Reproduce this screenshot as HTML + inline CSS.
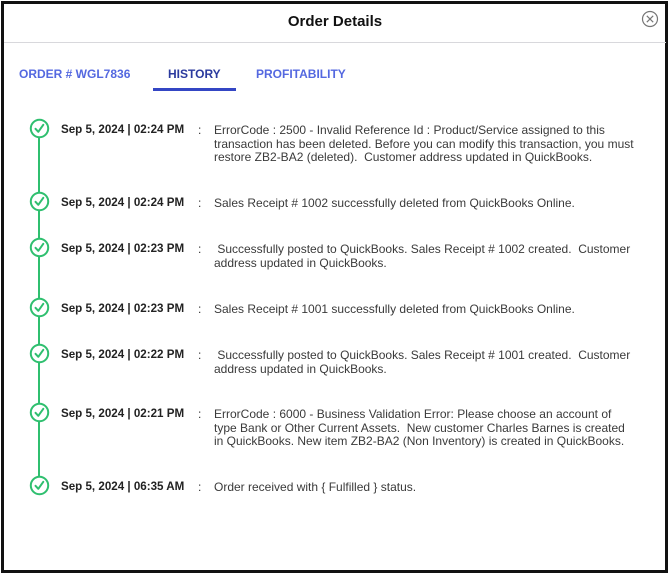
<!DOCTYPE html>
<html><head><meta charset="utf-8"><style>
*{margin:0;padding:0;box-sizing:border-box}
html,body{width:670px;height:575px;background:#fff;overflow:hidden;font-family:"Liberation Sans",Arial,sans-serif}
.frame{position:absolute;left:1px;top:1px;width:667px;height:572px;border:3px solid #111;}
.title{position:absolute;left:0;width:670px;top:13px;text-align:center;font-weight:bold;font-size:15px;color:#111}
.hr{position:absolute;left:4px;right:4px;top:42px;height:1px;background:#d8d8dc}
.tab{position:absolute;top:67px;font-size:12px;font-weight:bold;color:#5468e0}
.tab.act{color:#2b3a9e}
.ul{position:absolute;left:153px;top:88px;width:83px;height:3px;background:#3446c4}
.line{position:absolute;left:38px;top:130px;width:2px;height:356px;background:#2fbf6f}
.ic{position:absolute;left:29px;width:21px;height:21px}
.d{position:absolute;left:61px;font-size:11.6px;font-weight:bold;color:#222}
.c{position:absolute;left:198px;font-size:12px;color:#333}
.t{position:absolute;left:214px;width:420px;font-size:12px;line-height:13.5px;color:#3a3a3a;margin-top:1px}
</style></head><body>
<div class="frame"></div>
<div class="title">Order Details</div>
<svg style="position:absolute;left:641px;top:10px" width="18" height="18" viewBox="0 0 18 18"><circle cx="9" cy="9" r="7.5" fill="none" stroke="#777" stroke-width="1.2"/><path d="M5.8 5.8L12.2 12.2M12.2 5.8L5.8 12.2" stroke="#777" stroke-width="1.2"/></svg>
<div class="hr"></div>
<div class="tab" style="left:19px">ORDER # WGL7836</div>
<div class="tab act" style="left:168px">HISTORY</div>
<div class="tab" style="left:256px">PROFITABILITY</div>
<div class="ul"></div>
<div class="line"></div>

<svg class="ic" style="top:118px" viewBox="0 0 21 21"><circle cx="10.5" cy="10.5" r="8.7" fill="#fff" stroke="#2fbf6f" stroke-width="2"/><path d="M6.5 10.8L9.3 13.8L14.3 6.8" fill="none" stroke="#2fbf6f" stroke-width="2" stroke-linecap="round" stroke-linejoin="round"/></svg>
<div class="d" style="top:123px">Sep 5, 2024 | 02:24 PM</div><div class="c" style="top:123px">:</div>
<div class="t" style="top:123px">ErrorCode : 2500 - Invalid Reference Id : Product/Service assigned to this transaction has been deleted. Before you can modify this transaction, you must restore ZB2-BA2 (deleted).&nbsp; Customer address updated in QuickBooks.</div>

<svg class="ic" style="top:191px" viewBox="0 0 21 21"><circle cx="10.5" cy="10.5" r="8.7" fill="#fff" stroke="#2fbf6f" stroke-width="2"/><path d="M6.5 10.8L9.3 13.8L14.3 6.8" fill="none" stroke="#2fbf6f" stroke-width="2" stroke-linecap="round" stroke-linejoin="round"/></svg>
<div class="d" style="top:196px">Sep 5, 2024 | 02:24 PM</div><div class="c" style="top:196px">:</div>
<div class="t" style="top:196px">Sales Receipt # 1002 successfully deleted from QuickBooks Online.</div>

<svg class="ic" style="top:237px" viewBox="0 0 21 21"><circle cx="10.5" cy="10.5" r="8.7" fill="#fff" stroke="#2fbf6f" stroke-width="2"/><path d="M6.5 10.8L9.3 13.8L14.3 6.8" fill="none" stroke="#2fbf6f" stroke-width="2" stroke-linecap="round" stroke-linejoin="round"/></svg>
<div class="d" style="top:242px">Sep 5, 2024 | 02:23 PM</div><div class="c" style="top:242px">:</div>
<div class="t" style="top:242px">&nbsp;Successfully posted to QuickBooks. Sales Receipt # 1002 created.&nbsp; Customer address updated in QuickBooks.</div>

<svg class="ic" style="top:297px" viewBox="0 0 21 21"><circle cx="10.5" cy="10.5" r="8.7" fill="#fff" stroke="#2fbf6f" stroke-width="2"/><path d="M6.5 10.8L9.3 13.8L14.3 6.8" fill="none" stroke="#2fbf6f" stroke-width="2" stroke-linecap="round" stroke-linejoin="round"/></svg>
<div class="d" style="top:302px">Sep 5, 2024 | 02:23 PM</div><div class="c" style="top:302px">:</div>
<div class="t" style="top:302px">Sales Receipt # 1001 successfully deleted from QuickBooks Online.</div>

<svg class="ic" style="top:343px" viewBox="0 0 21 21"><circle cx="10.5" cy="10.5" r="8.7" fill="#fff" stroke="#2fbf6f" stroke-width="2"/><path d="M6.5 10.8L9.3 13.8L14.3 6.8" fill="none" stroke="#2fbf6f" stroke-width="2" stroke-linecap="round" stroke-linejoin="round"/></svg>
<div class="d" style="top:348px">Sep 5, 2024 | 02:22 PM</div><div class="c" style="top:348px">:</div>
<div class="t" style="top:348px">&nbsp;Successfully posted to QuickBooks. Sales Receipt # 1001 created.&nbsp; Customer address updated in QuickBooks.</div>

<svg class="ic" style="top:402px" viewBox="0 0 21 21"><circle cx="10.5" cy="10.5" r="8.7" fill="#fff" stroke="#2fbf6f" stroke-width="2"/><path d="M6.5 10.8L9.3 13.8L14.3 6.8" fill="none" stroke="#2fbf6f" stroke-width="2" stroke-linecap="round" stroke-linejoin="round"/></svg>
<div class="d" style="top:407px">Sep 5, 2024 | 02:21 PM</div><div class="c" style="top:407px">:</div>
<div class="t" style="top:407px">ErrorCode : 6000 - Business Validation Error: Please choose an account of type Bank or Other Current Assets.&nbsp; New customer Charles Barnes is created in QuickBooks. New item ZB2-BA2 (Non Inventory) is created in QuickBooks.</div>

<svg class="ic" style="top:475px" viewBox="0 0 21 21"><circle cx="10.5" cy="10.5" r="8.7" fill="#fff" stroke="#2fbf6f" stroke-width="2"/><path d="M6.5 10.8L9.3 13.8L14.3 6.8" fill="none" stroke="#2fbf6f" stroke-width="2" stroke-linecap="round" stroke-linejoin="round"/></svg>
<div class="d" style="top:480px">Sep 5, 2024 | 06:35 AM</div><div class="c" style="top:480px">:</div>
<div class="t" style="top:480px">Order received with { Fulfilled } status.</div>
</body></html>
